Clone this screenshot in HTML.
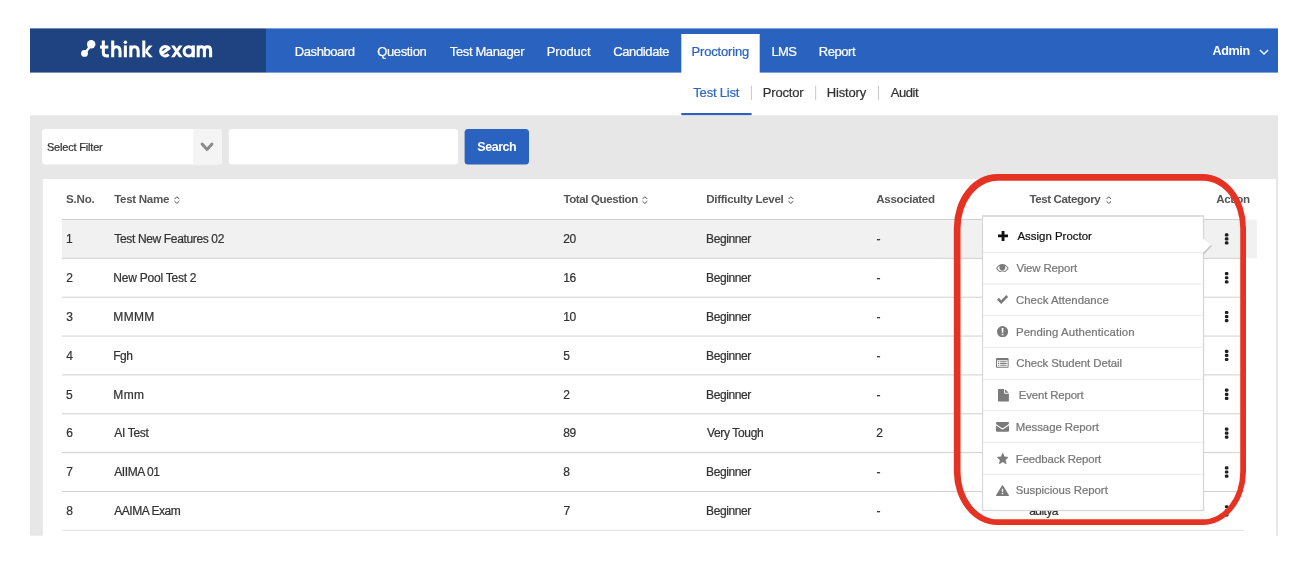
<!DOCTYPE html>
<html>
<head>
<meta charset="utf-8">
<title>Think Exam - Proctoring</title>
<style>
*{box-sizing:border-box;margin:0;padding:0}
html,body{width:1316px;height:574px;background:#fff;overflow:hidden}
body{font-family:"Liberation Sans",sans-serif;position:relative;color:#333}
#root{position:absolute;left:0;top:0;width:1316px;height:574px;will-change:transform;background:#fff}
.a{position:absolute}
.t{position:absolute;white-space:pre;line-height:1;-webkit-text-stroke:0.22px}
.ic{position:absolute;z-index:6}
</style>
</head>
<body>
<div id="root">
<svg class="a" style="left:0;top:0" width="1316" height="574" viewBox="0 0 1316 574"><rect x="30" y="28.4" width="236.00" height="44.20" fill="#1e4380"/><rect x="266" y="28.4" width="1012.00" height="44.20" fill="#2a62bf"/><rect x="681.3" y="34" width="78.40" height="40.00" fill="#fff"/><rect x="681.3" y="113" width="70.30" height="2.40" fill="#2a62bf"/><rect x="30" y="115.3" width="1248.00" height="420.40" fill="#e7e7e7"/><rect x="42.8" y="179" width="1233.20" height="358.00" fill="#fff"/><rect x="42" y="128.9" width="180.00" height="35.60" rx="3.5" fill="#fff"/><path fill="#f4f4f4" d="M193.2 128.9H218.5A3.5 3.5 0 0 1 222 132.4V161A3.5 3.5 0 0 1 218.5 164.500H193.200z"/><rect x="228.8" y="128.9" width="229.20" height="35.60" rx="3.5" fill="#fff"/><rect x="464.6" y="128.9" width="64.40" height="35.60" rx="3.5" fill="#2a62bf"/><rect x="61.9" y="219.5" width="1195.00" height="38.80" fill="#f1f1f1"/><rect x="61.9" y="219.0" width="1182.10" height="1.00" fill="#d0d0d0"/><rect x="61.9" y="257.85" width="1182.10" height="1.00" fill="#d0d0d0"/><rect x="61.9" y="296.7" width="1182.10" height="1.00" fill="#d0d0d0"/><rect x="61.9" y="335.55" width="1182.10" height="1.00" fill="#d0d0d0"/><rect x="61.9" y="374.4" width="1182.10" height="1.00" fill="#d0d0d0"/><rect x="61.9" y="413.25" width="1182.10" height="1.00" fill="#d0d0d0"/><rect x="61.9" y="452.1" width="1182.10" height="1.00" fill="#d0d0d0"/><rect x="61.9" y="490.95" width="1182.10" height="1.00" fill="#d0d0d0"/><rect x="61.9" y="529.8" width="1182.10" height="1.00" fill="#e0e0e0"/><rect x="750.9" y="85.7" width="1.00" height="14.30" fill="#c8c8c8"/><rect x="815.15" y="85.7" width="1.00" height="14.30" fill="#c8c8c8"/><rect x="878.0" y="85.7" width="1.00" height="14.30" fill="#c8c8c8"/></svg>
<svg class="a" style="left:30px;top:28px" width="236" height="45" viewBox="30 28 236 45">
<g fill="#fff"><circle cx="91.2" cy="44.3" r="4.2"/><circle cx="84.5" cy="53.4" r="3.4"/><path d="M87.400 46.000C88.600 48.600 87.800 50.200 85.600 50.300L87.600 54.400C86.600 52.200 87.600 50.400 90.000 48.400z"/><path stroke="#fff" stroke-width="2.300" d="M90.000 46.600L85.900 51.800"/></g>
<g fill="none" stroke="#fff" stroke-width="3.050" stroke-linejoin="round">
<path d="M103.350 40.500V52.800Q103.350 55.850 106.400 55.850H108.900"/><path d="M100 47.050H108.300"/>
<path d="M112.700 40.500V57.300M112.700 51.500C112.700 48.300 114.400 46.750 116.400 46.750S120.050 48.300 120.050 51.500V57.300"/>
<path d="M125.350 45.400V57.300"/>
<path d="M130.800 45.400V57.300M130.800 51.500C130.800 48.300 132.500 46.750 134.500 46.750S138.150 48.300 138.150 51.500V57.300"/>
<path d="M143.800 40.500V57.300"/>
<path d="M161.500 53.800L169.200 48.300C167.800 46.700 166.400 46.450 164.800 46.450A4.500 4.800 0 1 0 168.600 54.300"/>

<path d="M193.300 45.400V57.300"/><ellipse cx="188.700" cy="51.350" rx="4.600" ry="4.600"/>
<path d="M198.200 45.400V57.300M198.200 50.500C198.200 48 199.600 46.750 201.300 46.750S204.400 48 204.400 50.500V57.300M204.400 50.500C204.400 48 205.800 46.750 207.500 46.750S210.600 48 210.600 50.500V57.300"/>
</g>
<path fill="#fff" d="M145.000 50.300L148.900 45.400H152.500L147.500 51.500zM146.300 49.900L152.900 57.300H149.300L144.800 52.300zM171.000 45.400H174.500L182.500 57.300H179.000zM179.000 45.400H182.500L174.500 57.300H171.000z"/><circle cx="125.350" cy="42.300" r="1.750" fill="#fff"/>
</svg>

<svg class="a" style="left:0;top:0;z-index:5" width="1316" height="574" viewBox="0 0 1316 574"><rect x="1224.85" y="233.20" width="3.60" height="3.20" rx="1.25" fill="#202020"/><rect x="1224.85" y="237.30" width="3.60" height="3.20" rx="1.25" fill="#202020"/><rect x="1224.85" y="241.35" width="3.60" height="3.20" rx="1.25" fill="#202020"/><rect x="1224.85" y="272.05" width="3.60" height="3.20" rx="1.25" fill="#202020"/><rect x="1224.85" y="276.15" width="3.60" height="3.20" rx="1.25" fill="#202020"/><rect x="1224.85" y="280.20" width="3.60" height="3.20" rx="1.25" fill="#202020"/><rect x="1224.85" y="310.90" width="3.60" height="3.20" rx="1.25" fill="#202020"/><rect x="1224.85" y="315.00" width="3.60" height="3.20" rx="1.25" fill="#202020"/><rect x="1224.85" y="319.05" width="3.60" height="3.20" rx="1.25" fill="#202020"/><rect x="1224.85" y="349.75" width="3.60" height="3.20" rx="1.25" fill="#202020"/><rect x="1224.85" y="353.85" width="3.60" height="3.20" rx="1.25" fill="#202020"/><rect x="1224.85" y="357.90" width="3.60" height="3.20" rx="1.25" fill="#202020"/><rect x="1224.85" y="388.60" width="3.60" height="3.20" rx="1.25" fill="#202020"/><rect x="1224.85" y="392.70" width="3.60" height="3.20" rx="1.25" fill="#202020"/><rect x="1224.85" y="396.75" width="3.60" height="3.20" rx="1.25" fill="#202020"/><rect x="1224.85" y="427.45" width="3.60" height="3.20" rx="1.25" fill="#202020"/><rect x="1224.85" y="431.55" width="3.60" height="3.20" rx="1.25" fill="#202020"/><rect x="1224.85" y="435.60" width="3.60" height="3.20" rx="1.25" fill="#202020"/><rect x="1224.85" y="466.30" width="3.60" height="3.20" rx="1.25" fill="#202020"/><rect x="1224.85" y="470.40" width="3.60" height="3.20" rx="1.25" fill="#202020"/><rect x="1224.85" y="474.45" width="3.60" height="3.20" rx="1.25" fill="#202020"/><rect x="1224.85" y="505.15" width="3.60" height="3.20" rx="1.25" fill="#202020"/><rect x="1224.85" y="509.25" width="3.60" height="3.20" rx="1.25" fill="#202020"/><rect x="1224.85" y="513.30" width="3.60" height="3.20" rx="1.25" fill="#202020"/><rect x="981.80" y="215.40" width="222.50" height="296.20" fill="rgba(0,0,0,0.04)"/><rect x="982.05" y="215.20" width="222.00" height="295.75" fill="#d6d6d6"/><rect x="983.10" y="216.80" width="219.80" height="293.05" fill="#fff"/><path fill="#c6c6c6" d="M1210.500 244.700L1211.900 246.000 1203.900 254.600 1203.000 252.800z"/><path fill="#fff" d="M1202.500 238.200L1210.700 245.100 1202.500 253.000z"/><rect x="983.10" y="251.90" width="219.80" height="1.00" fill="#ebebeb"/><rect x="983.10" y="283.50" width="219.80" height="1.00" fill="#ebebeb"/><rect x="983.10" y="314.90" width="219.80" height="1.00" fill="#ebebeb"/><rect x="983.10" y="346.70" width="219.80" height="1.00" fill="#ebebeb"/><rect x="983.10" y="378.90" width="219.80" height="1.00" fill="#ebebeb"/><rect x="983.10" y="410.20" width="219.80" height="1.00" fill="#ebebeb"/><rect x="983.10" y="441.80" width="219.80" height="1.00" fill="#ebebeb"/><rect x="983.10" y="473.80" width="219.80" height="1.00" fill="#ebebeb"/></svg>
<svg class="ic" style="left:997.5px;top:231.3px;z-index:6" width="10.1" height="9.9" viewBox="0 0 10 10" preserveAspectRatio="none"><path fill="#111" d="M3.6 0h2.8v3.6H10v2.8H6.4V10H3.6V6.4H0V3.6h3.6z"/></svg>
<svg class="ic" style="left:996.3px;top:263.5px;z-index:6" width="12.7" height="8.7" viewBox="0 0 26 18" preserveAspectRatio="none"><path fill="#7a7a7a" fill-rule="evenodd" d="M0 9C3.5 3 8.5 0 13 0s9.500 3 13 9c-3.500 6-8.500 9-13 9S3.500 15 0 9zM2.400 9c2.600 4.200 6.600 6.800 10.600 6.800S21 13.200 23.600 9C22.200 6.700 20.200 4.800 18 3.600c.700 1.100 1.100 2.400 1.100 3.800 0 3.900-2.700 6.500-6.100 6.500S6.900 11.300 6.900 7.400c0-1.400.400-2.700 1.100-3.800C5.800 4.800 3.800 6.700 2.400 9z"/><circle cx="13" cy="7.6" r="4.300" fill="#7a7a7a"/></svg>
<svg class="ic" style="left:996.8px;top:295.2px;z-index:6" width="11.2" height="8.7" viewBox="0 0 22 17" preserveAspectRatio="none"><path fill="#7a7a7a" d="M0 9.200L3.600 5.600 8.200 10.200 18.400 0 22 3.600 8.200 17.400z"/></svg>
<svg class="ic" style="left:996.9px;top:325.8px;z-index:6" width="11.1" height="11.3" viewBox="0 0 22 22" preserveAspectRatio="none"><circle cx="11" cy="11" r="11" fill="#7a7a7a"/><path fill="#fff" d="M9.200 4h3.600l-.400 9H9.600zM9.300 15h3.400v3.200H9.300z"/></svg>
<svg class="ic" style="left:996.3px;top:358.2px;z-index:6" width="12.6" height="9.8" viewBox="0 0 26 20" preserveAspectRatio="none"><path fill="#7a7a7a" fill-rule="evenodd" d="M2 0h22a2 2 0 0 1 2 2v16a2 2 0 0 1-2 2H2a2 2 0 0 1-2-2V2a2 2 0 0 1 2-2zM2 4.500v13.500h22V4.500z"/><path fill="#7a7a7a" d="M4.200 6.500h2.600v2H4.200zM8.600 6.500h13.200v2H8.600zM4.200 10.200h2.600v2H4.200zM8.600 10.200h13.200v2H8.600zM4.200 13.900h2.600v2H4.200zM8.600 13.900h13.200v2H8.600z"/></svg>
<svg class="ic" style="left:998.1px;top:389.1px;z-index:6" width="10.9" height="12.5" viewBox="0 0 22 25" preserveAspectRatio="none"><path fill="#7a7a7a" d="M1.500 0H12.400V8.200a1.500 1.500 0 0 0 1.500 1.500H22V23.500a1.500 1.500 0 0 1-1.500 1.500H1.500A1.500 1.500 0 0 1 0 23.500V1.500A1.500 1.500 0 0 1 1.500 0zM14.300 0.300L21.700 7.700H14.300z"/></svg>
<svg class="ic" style="left:996.1px;top:421.9px;z-index:6" width="13.0" height="9.8" viewBox="0 0 26 20" preserveAspectRatio="none"><path fill="#7a7a7a" d="M2 0H24A2 2 0 0 1 26 2.200C26 3.600 25 4.800 23.800 5.700L15 11.800C14.400 12.200 13.600 12.800 13 12.800S11.600 12.200 11 11.800L2.200 5.700C1.200 5 0 3.600 0 2.300A2 2 0 0 1 2 0zM26 6.800V18A2 2 0 0 1 24 20H2A2 2 0 0 1 0 18V6.800C.4 7.300 1 7.700 1.500 8.100L10 13.900C10.900 14.500 12 15.100 13 15.100S15.100 14.500 16 13.900L24.500 8.100C25 7.700 25.600 7.300 26 6.800z"/></svg>
<svg class="ic" style="left:996.9px;top:453.1px;z-index:6" width="11.5" height="11.1" viewBox="0.4 0.4 19.2 18.4" preserveAspectRatio="none"><polygon fill="#7a7a7a" stroke="#7a7a7a" stroke-width="0.8" stroke-linejoin="round" points="10.00,0.50 12.70,6.78 19.51,7.41 14.37,11.92 15.88,18.59 10.00,15.10 4.12,18.59 5.63,11.92 0.49,7.41 7.30,6.78"/></svg>
<svg class="ic" style="left:996.1px;top:484.7px;z-index:6" width="13.0" height="11.0" viewBox="0 0 26 22" preserveAspectRatio="none"><path fill="#7a7a7a" stroke="#7a7a7a" stroke-width="2.4" stroke-linejoin="round" d="M13 1.600L24.600 20.800H1.400z"/><path fill="#fff" d="M11.500 7.500h3l-.4 7h-2.200zM11.600 16h2.800v2.600h-2.800z"/></svg>
<svg class="ic" style="left:199.0px;top:141.0px;z-index:2" width="16.0" height="12.0" viewBox="199 141 16 12" preserveAspectRatio="none"><path fill="none" stroke="#8a8a8a" stroke-width="2.900" stroke-linecap="round" stroke-linejoin="round" d="M202.100 144L207.050 149.400 212.000 144"/></svg>
<svg class="ic" style="left:1258.5px;top:48.8px;z-index:2" width="10.0" height="6.8" viewBox="0 0 10 6.800" preserveAspectRatio="none"><path fill="none" stroke="#fff" stroke-width="1.400" d="M0.900 1.000L5.000 5.100 9.100 1.000"/></svg>
<svg class="ic" style="left:174.3px;top:195.8px;z-index:2" width="5.8" height="8.1" viewBox="0 0 5.800 8.100" preserveAspectRatio="none"><path fill="none" stroke="#505050" stroke-width="1.000" d="M0.500 3.100L2.900 0.700 5.300 3.100M0.500 5.100L2.900 7.500 5.300 5.100"/></svg>
<svg class="ic" style="left:642.2px;top:195.8px;z-index:2" width="5.8" height="8.1" viewBox="0 0 5.800 8.100" preserveAspectRatio="none"><path fill="none" stroke="#505050" stroke-width="1.000" d="M0.500 3.100L2.900 0.700 5.300 3.100M0.500 5.100L2.900 7.500 5.300 5.100"/></svg>
<svg class="ic" style="left:788.2px;top:195.8px;z-index:2" width="5.8" height="8.1" viewBox="0 0 5.800 8.100" preserveAspectRatio="none"><path fill="none" stroke="#505050" stroke-width="1.000" d="M0.500 3.100L2.900 0.700 5.300 3.100M0.500 5.100L2.900 7.500 5.300 5.100"/></svg>
<svg class="ic" style="left:1105.6px;top:195.8px;z-index:2" width="5.8" height="8.1" viewBox="0 0 5.800 8.100" preserveAspectRatio="none"><path fill="none" stroke="#505050" stroke-width="1.000" d="M0.500 3.100L2.900 0.700 5.300 3.100M0.500 5.100L2.900 7.500 5.300 5.100"/></svg>

<span class="t" style="left:294.85px;top:45px;font-size:13px;color:#fff;letter-spacing:-0.427px;">Dashboard</span>
<span class="t" style="left:377.26px;top:45px;font-size:13px;color:#fff;letter-spacing:-0.366px;">Question</span>
<span class="t" style="left:449.77px;top:45px;font-size:13px;color:#fff;letter-spacing:-0.368px;">Test Manager</span>
<span class="t" style="left:546.82px;top:45px;font-size:13px;color:#fff;letter-spacing:-0.180px;">Product</span>
<span class="t" style="left:613.15px;top:45px;font-size:13px;color:#fff;letter-spacing:-0.361px;">Candidate</span>
<span class="t" style="left:771.54px;top:45px;font-size:13px;color:#fff;letter-spacing:-0.686px;">LMS</span>
<span class="t" style="left:818.82px;top:45px;font-size:13px;color:#fff;letter-spacing:-0.455px;">Report</span>
<span class="t" style="left:691.51px;top:45px;font-size:13px;color:#2a62bf;letter-spacing:-0.169px;">Proctoring</span>
<span class="t" style="left:1212.61px;top:45px;font-size:12.6px;color:#fff;font-weight:bold;-webkit-text-stroke:0;letter-spacing:-0.411px;">Admin</span>
<span class="t" style="left:693.32px;top:86px;font-size:13px;color:#2e66c4;letter-spacing:-0.207px;">Test List</span>
<span class="t" style="left:762.77px;top:86px;font-size:13px;color:#333;letter-spacing:-0.162px;">Proctor</span>
<span class="t" style="left:826.85px;top:86px;font-size:13px;color:#333;letter-spacing:-0.179px;">History</span>
<span class="t" style="left:890.83px;top:86px;font-size:13px;color:#333;letter-spacing:-0.493px;">Audit</span>
<span class="t" style="left:46.97px;top:142px;font-size:11px;color:#333;letter-spacing:-0.188px;">Select Filter</span>
<span class="t" style="left:477.30px;top:141px;font-size:12.5px;color:#fff;font-weight:bold;-webkit-text-stroke:0;letter-spacing:-0.452px;">Search</span>
<span class="t" style="left:65.88px;top:193px;font-size:11.6px;color:#555;font-weight:bold;-webkit-text-stroke:0;letter-spacing:-0.187px;">S.No.</span>
<span class="t" style="left:114.21px;top:193px;font-size:11.6px;color:#555;font-weight:bold;-webkit-text-stroke:0;letter-spacing:-0.323px;">Test Name</span>
<span class="t" style="left:563.40px;top:193px;font-size:11.6px;color:#555;font-weight:bold;-webkit-text-stroke:0;letter-spacing:-0.421px;">Total Question</span>
<span class="t" style="left:706.25px;top:193px;font-size:11.6px;color:#555;font-weight:bold;-webkit-text-stroke:0;letter-spacing:-0.332px;">Difficulty Level</span>
<span class="t" style="left:876.35px;top:193px;font-size:11.6px;color:#555;font-weight:bold;-webkit-text-stroke:0;letter-spacing:-0.359px;">Associated</span>
<span class="t" style="left:1029.40px;top:193px;font-size:11.6px;color:#555;font-weight:bold;-webkit-text-stroke:0;letter-spacing:-0.423px;">Test Category</span>
<span class="t" style="left:1216.31px;top:193px;font-size:11.6px;color:#555;font-weight:bold;-webkit-text-stroke:0;letter-spacing:-0.462px;">Action</span>
<span class="t" style="left:65.98px;top:233px;font-size:12px;color:#333;">1</span>
<span class="t" style="left:114.29px;top:233px;font-size:12px;color:#333;letter-spacing:-0.349px;">Test New Features 02</span>
<span class="t" style="left:563.31px;top:233px;font-size:12px;color:#333;letter-spacing:-0.508px;">20</span>
<span class="t" style="left:706.05px;top:233px;font-size:12px;color:#333;letter-spacing:-0.417px;">Beginner</span>
<span class="t" style="left:876.48px;top:233px;font-size:12px;color:#333;">-</span>
<span class="t" style="left:66.21px;top:272px;font-size:12px;color:#333;">2</span>
<span class="t" style="left:113.37px;top:272px;font-size:12px;color:#333;letter-spacing:-0.239px;">New Pool Test 2</span>
<span class="t" style="left:563.14px;top:272px;font-size:12px;color:#333;letter-spacing:-0.256px;">16</span>
<span class="t" style="left:706.05px;top:272px;font-size:12px;color:#333;letter-spacing:-0.417px;">Beginner</span>
<span class="t" style="left:876.48px;top:272px;font-size:12px;color:#333;">-</span>
<span class="t" style="left:66.25px;top:311px;font-size:12px;color:#333;">3</span>
<span class="t" style="left:113.37px;top:311px;font-size:12px;color:#333;letter-spacing:0.324px;">MMMM</span>
<span class="t" style="left:563.14px;top:311px;font-size:12px;color:#333;letter-spacing:-0.340px;">10</span>
<span class="t" style="left:706.05px;top:311px;font-size:12px;color:#333;letter-spacing:-0.417px;">Beginner</span>
<span class="t" style="left:876.48px;top:311px;font-size:12px;color:#333;">-</span>
<span class="t" style="left:66.35px;top:350px;font-size:12px;color:#333;">4</span>
<span class="t" style="left:113.37px;top:350px;font-size:12px;color:#333;letter-spacing:-0.615px;">Fgh</span>
<span class="t" style="left:563.19px;top:350px;font-size:12px;color:#333;">5</span>
<span class="t" style="left:706.05px;top:350px;font-size:12px;color:#333;letter-spacing:-0.417px;">Beginner</span>
<span class="t" style="left:876.48px;top:350px;font-size:12px;color:#333;">-</span>
<span class="t" style="left:66.02px;top:389px;font-size:12px;color:#333;">5</span>
<span class="t" style="left:113.37px;top:389px;font-size:12px;color:#333;letter-spacing:0.362px;">Mmm</span>
<span class="t" style="left:563.31px;top:389px;font-size:12px;color:#333;">2</span>
<span class="t" style="left:706.05px;top:389px;font-size:12px;color:#333;letter-spacing:-0.417px;">Beginner</span>
<span class="t" style="left:876.48px;top:389px;font-size:12px;color:#333;">-</span>
<span class="t" style="left:66.14px;top:427px;font-size:12px;color:#333;">6</span>
<span class="t" style="left:114.28px;top:427px;font-size:12px;color:#333;letter-spacing:-0.313px;">AI Test</span>
<span class="t" style="left:563.32px;top:427px;font-size:12px;color:#333;letter-spacing:-0.432px;">89</span>
<span class="t" style="left:706.95px;top:427px;font-size:12px;color:#333;letter-spacing:-0.341px;">Very Tough</span>
<span class="t" style="left:876.30px;top:427px;font-size:12px;color:#333;">2</span>
<span class="t" style="left:66.32px;top:466px;font-size:12px;color:#333;">7</span>
<span class="t" style="left:114.28px;top:466px;font-size:12px;color:#333;letter-spacing:-0.437px;">AIIMA 01</span>
<span class="t" style="left:563.32px;top:466px;font-size:12px;color:#333;">8</span>
<span class="t" style="left:706.05px;top:466px;font-size:12px;color:#333;letter-spacing:-0.417px;">Beginner</span>
<span class="t" style="left:876.48px;top:466px;font-size:12px;color:#333;">-</span>
<span class="t" style="left:66.29px;top:505px;font-size:12px;color:#333;">8</span>
<span class="t" style="left:114.28px;top:505px;font-size:12px;color:#333;letter-spacing:-0.466px;">AAIMA Exam</span>
<span class="t" style="left:563.40px;top:505px;font-size:12px;color:#333;">7</span>
<span class="t" style="left:706.05px;top:505px;font-size:12px;color:#333;letter-spacing:-0.417px;">Beginner</span>
<span class="t" style="left:876.48px;top:505px;font-size:12px;color:#333;">-</span>
<span class="t" style="left:1029.25px;top:505px;font-size:12px;color:#333;letter-spacing:-0.550px;">aditya</span>
<span class="t" style="left:1017.45px;top:231px;font-size:11.4px;color:#111;letter-spacing:0.026px;z-index:6;">Assign Proctor</span>
<span class="t" style="left:1016.38px;top:263px;font-size:11.4px;color:#777;letter-spacing:-0.106px;z-index:6;">View Report</span>
<span class="t" style="left:1015.97px;top:295px;font-size:11.4px;color:#777;letter-spacing:0.024px;z-index:6;">Check Attendance</span>
<span class="t" style="left:1016.01px;top:327px;font-size:11.4px;color:#777;letter-spacing:0.095px;z-index:6;">Pending Authentication</span>
<span class="t" style="left:1016.23px;top:358px;font-size:11.4px;color:#777;letter-spacing:-0.063px;z-index:6;">Check Student Detail</span>
<span class="t" style="left:1018.84px;top:390px;font-size:11.4px;color:#777;letter-spacing:-0.148px;z-index:6;">Event Report</span>
<span class="t" style="left:1015.83px;top:422px;font-size:11.4px;color:#777;letter-spacing:-0.045px;z-index:6;">Message Report</span>
<span class="t" style="left:1015.83px;top:454px;font-size:11.4px;color:#777;letter-spacing:-0.139px;z-index:6;">Feedback Report</span>
<span class="t" style="left:1015.69px;top:485px;font-size:11.4px;color:#777;letter-spacing:-0.020px;z-index:6;">Suspicious Report</span>
<svg class="a" style="left:0;top:0;z-index:8" width="1316" height="574" viewBox="0 0 1316 574"><path fill="#e63223" fill-rule="evenodd" d="M997.30 174.00H1202.50A43.5 54 0 0 1 1246.00 228.00V471.10A43.5 54 0 0 1 1202.50 525.10H997.30A43.5 54 0 0 1 953.80 471.10V228.00A43.5 54 0 0 1 997.30 174.00zM997.70 180.80H1203.05A37.2 47.6 0 0 1 1240.25 228.40V471.70A37.2 47.6 0 0 1 1203.05 519.30H997.70A37.2 47.6 0 0 1 960.50 471.70V228.40A37.2 47.6 0 0 1 997.70 180.80z"/></svg>
</div>
</body>
</html>
